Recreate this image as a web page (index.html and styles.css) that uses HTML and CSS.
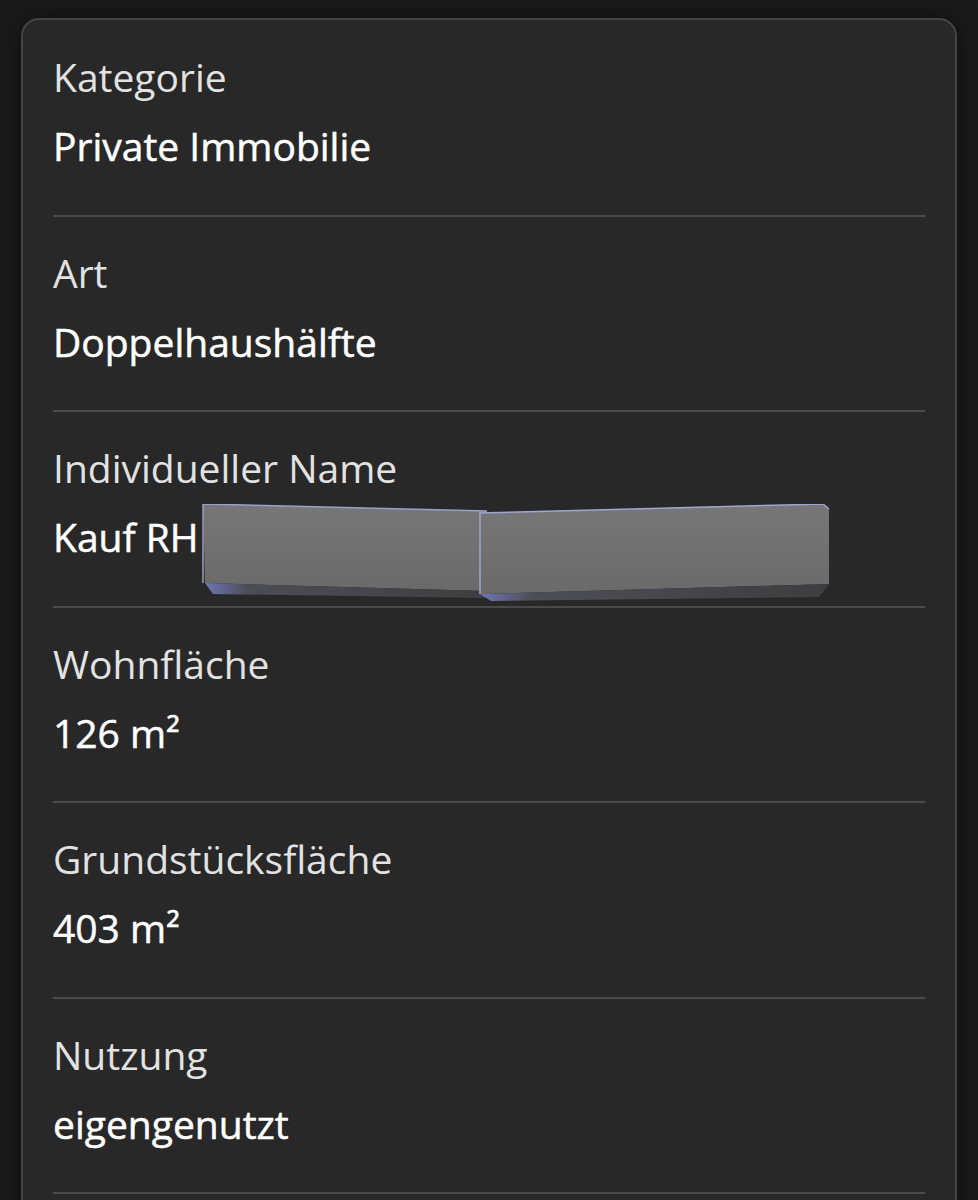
FILE: index.html
```html
<!DOCTYPE html>
<html lang="de">
<head>
    <meta charset="UTF-8">
    <meta name="viewport" content="width=device-width, initial-scale=1.0">
    <title>Objektdetails</title>
    <link rel="stylesheet" href="styles.css">
</head>
<body>
    <div class="card">
        <div class="row">
            <div class="label">Kategorie</div>
            <div class="value">Private Immobilie</div>
        </div>
        <div class="row">
            <div class="label">Art</div>
            <div class="value">Doppelhaushälfte</div>
        </div>
        <div class="row">
            <div class="label">Individueller Name</div>
            <div class="value value-redacted">
                <span>Kauf RH</span>
                <!-- geschwärzter Teil des Namens -->
                <svg class="redact" width="640" height="100" viewBox="0 0 640 100">
                    <defs>
                        <linearGradient id="face" x1="0" y1="0" x2="0" y2="1">
                            <stop offset="0" stop-color="#777"/>
                            <stop offset="1" stop-color="#6a6a6a"/>
                        </linearGradient>
                        <linearGradient id="bevel" x1="0" y1="0" x2="1" y2="0">
                            <stop offset="0" stop-color="#6f76b8"/>
                            <stop offset="0.15" stop-color="#4d4d55"/>
                            <stop offset="1" stop-color="#3e3e40"/>
                        </linearGradient>
                    </defs>
                    <polygon points="8,0 292,7 292,87 10,79" fill="url(#face)"/>
                    <polygon points="10,79 292,87 292,94 18,90" fill="url(#bevel)"/>
                    <polyline points="8,79 8,0 292,7" fill="none" stroke="#9aa0c8" stroke-width="1.5"/>
                    <polygon points="285,9 628,0 634,5 634,80 285,90" fill="url(#face)"/>
                    <polygon points="285,90 634,80 624,93 296,97" fill="url(#bevel)"/>
                    <polyline points="285,90 285,9 628,0 634,5" fill="none" stroke="#a0a6d0" stroke-width="1.5"/>
                </svg>
            </div>
        </div>
        <div class="row">
            <div class="label">Wohnfläche</div>
            <div class="value">126 m²</div>
        </div>
        <div class="row">
            <div class="label">Grundstücksfläche</div>
            <div class="value">403 m²</div>
        </div>
        <div class="row">
            <div class="label">Nutzung</div>
            <div class="value">eigengenutzt</div>
        </div>
    </div>
</body>
</html>
```

FILE: styles.css
```css
body {
    margin: 0;
    padding: 18px 21px;
    background-color: #1a1a1a;
    font-family: 'Open Sans', 'Noto Sans', Arial, sans-serif;
}
.card {
    background: #282828;
    border: 2px solid #444;
    border-radius: 18px;
    padding: 1px 30px 40px;
    box-shadow: 0 0 24px rgba(0, 0, 0, 0.45);
}
.row {
    padding: 31px 0 43.5px;
    border-bottom: 2px solid #4a4a4a;
}
.label {
    font-size: 39px;
    line-height: 50px;
    color: #e2e2e2;
}
.value {
    font-size: 39px;
    line-height: 50px;
    color: #fff;
    -webkit-text-stroke: 0.5px #fff;
    margin-top: 19px;
}
.value-redacted {
    display: flex;
    align-items: flex-start;
}
.redact {
    flex: none;
    margin: -8px 0 -42px -4px;
}
```
